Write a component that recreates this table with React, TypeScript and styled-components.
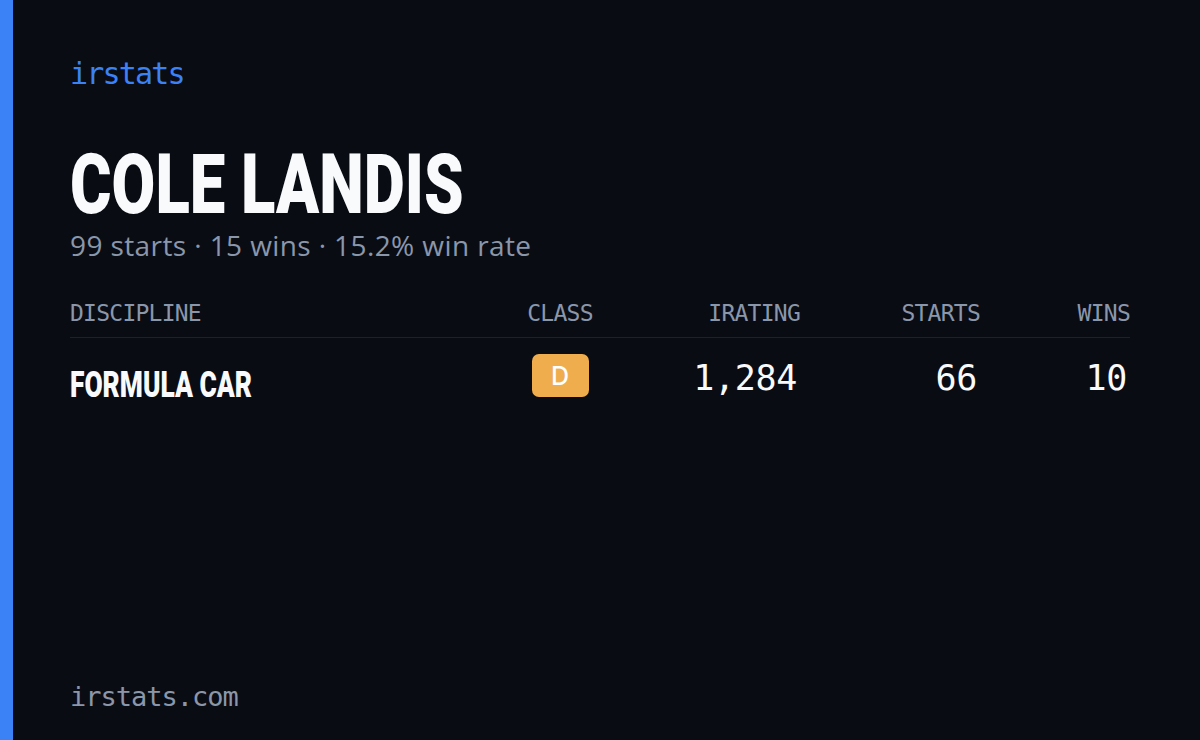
import React from "react";
import styled, { createGlobalStyle } from "styled-components";

const Global = createGlobalStyle`
  html, body { margin: 0; padding: 0; background: #0a0c14; }
  #root { width: 1200px; height: 740px; }
`;

const Page = styled.div`
  display: flex;
  width: 1200px;
  height: 740px;
  background: #0a0c14;
  overflow: hidden;
`;

const Accent = styled.div`
  width: 13px;
  flex: 0 0 13px;
  background: #3b82f6;
`;

const Content = styled.main`
  flex: 1;
  display: flex;
  flex-direction: column;
  padding: 59px 70px 30px 57px;
`;

const Brand = styled.div`
  font-family: "DejaVu Sans Mono", monospace;
  font-size: 30px;
  letter-spacing: -1.8px;
  line-height: 1;
  color: #3b82f6;
`;

const Name = styled.h1`
  margin: 54px 0 0 0;
  font-family: Roboto, "Liberation Sans", sans-serif;
  font-weight: 900;
  font-size: 84px;
  line-height: 1;
  color: #f8fafc;
  transform: scaleX(0.755);
  transform-origin: left center;
  white-space: nowrap;
`;

const Summary = styled.div`
  margin-top: 4px;
  font-family: "Open Sans", Lato, sans-serif;
  font-weight: 500;
  font-size: 28px;
  letter-spacing: 0.4px;
  line-height: 1;
  color: #8a97ab;
`;

const Table = styled.div`
  margin-top: 43px;
  display: flex;
  flex-direction: column;
`;

const Row = styled.div<{ $head?: boolean }>`
  display: grid;
  grid-template-columns: 1fr 80px 200px 180px 150px;
  align-items: start;
  ${(p) =>
    p.$head
      ? `padding-bottom: 12px; border-bottom: 1px solid #1c212d;`
      : `padding-top: 16px;`}
`;

const Head = styled.div<{ $align: "left" | "center" | "right" }>`
  font-family: "DejaVu Sans Mono", monospace;
  font-size: 23px;
  letter-spacing: -0.75px;
  line-height: 1;
  color: #8a97ab;
  text-align: ${(p) => p.$align};
`;

const Discipline = styled.div`
  margin-top: 13px;
  font-family: Roboto, "Liberation Sans", sans-serif;
  font-weight: 900;
  font-size: 36px;
  line-height: 1;
  color: #f8fafc;
  transform: scaleX(0.732);
  transform-origin: left center;
  white-space: nowrap;
`;

const ClassCell = styled.div`
  display: flex;
  justify-content: center;
`;

const Badge = styled.div<{ $color: string }>`
  width: 57px;
  height: 43px;
  border-radius: 7px;
  background: ${(p) => p.$color};
  display: flex;
  align-items: center;
  justify-content: center;
  font-family: Inter, "Noto Sans", sans-serif;
  font-weight: 500;
  font-size: 25px;
  color: #ffffff;
`;

const Num = styled.div`
  margin-top: 7px;
  padding-right: 3px;
  font-family: "DejaVu Sans Mono", monospace;
  font-size: 35px;
  letter-spacing: -0.3px;
  line-height: 1;
  color: #f8fafc;
  text-align: right;
`;

const Footer = styled.div`
  margin-top: auto;
  font-family: "DejaVu Sans Mono", monospace;
  font-size: 27px;
  letter-spacing: -1px;
  line-height: 1;
  color: #8a97ab;
`;

const rows = [
  { discipline: "FORMULA CAR", cls: "D", color: "#f0ad4e", irating: "1,284", starts: "66", wins: "10" },
];

export default function App() {
  return (
    <Page>
      <Global />
      <Accent />
      <Content>
        <Brand>irstats</Brand>
        <Name>COLE LANDIS</Name>
        <Summary>99 starts · 15 wins · 15.2% win rate</Summary>
        <Table>
          <Row $head>
            <Head $align="left">DISCIPLINE</Head>
            <Head $align="center">CLASS</Head>
            <Head $align="right">IRATING</Head>
            <Head $align="right">STARTS</Head>
            <Head $align="right">WINS</Head>
          </Row>
          {rows.map((r) => (
            <Row key={r.discipline}>
              <Discipline>{r.discipline}</Discipline>
              <ClassCell>
                <Badge $color={r.color}>{r.cls}</Badge>
              </ClassCell>
              <Num>{r.irating}</Num>
              <Num>{r.starts}</Num>
              <Num>{r.wins}</Num>
            </Row>
          ))}
        </Table>
        <Footer>irstats.com</Footer>
      </Content>
    </Page>
  );
}
